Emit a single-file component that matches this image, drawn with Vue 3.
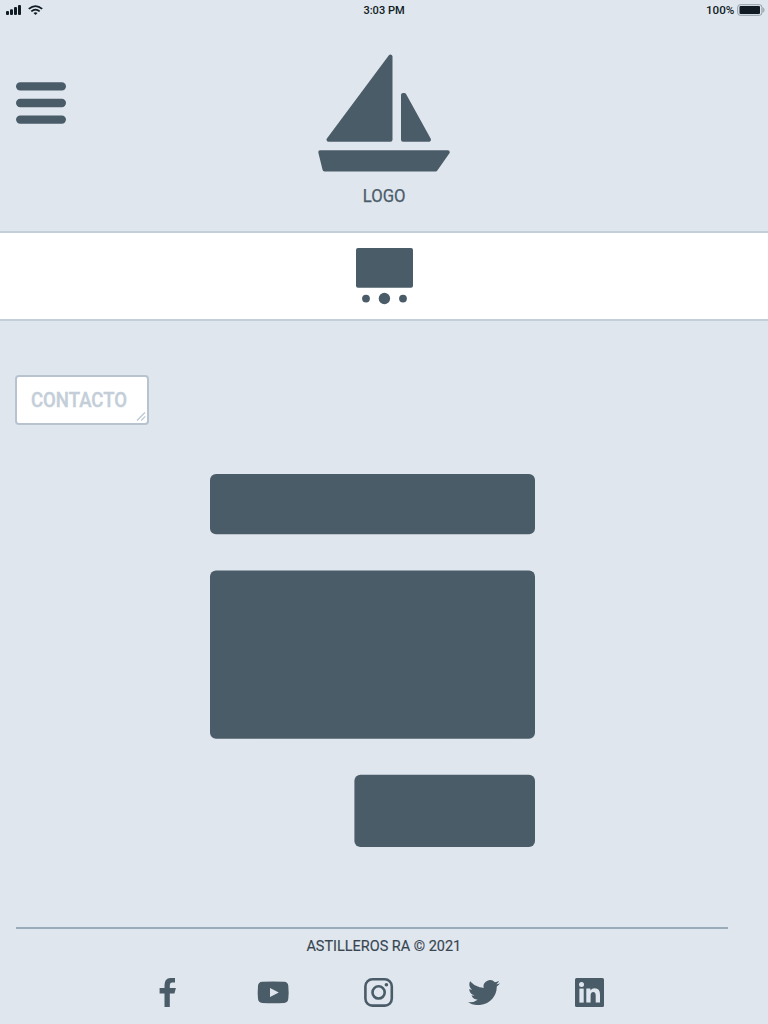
<script setup>
const bars = [0.2, 16.8, 33.4]
const blocks = [
  { name: 'name', x: 0, y: 0, width: 325, height: 60.2 },
  { name: 'message', x: 0, y: 96.4, width: 325, height: 168.3 },
  { name: 'submit', x: 144.4, y: 300.8, width: 180.6, height: 72.2 }
]
</script>

<template>
  <main class="screen">
    <div class="status">
      <svg class="signal" viewBox="0 0 46 20">
        <g fill="#101b24">
          <rect x="6" y="11" width="3" height="4" rx="1" />
          <rect x="10" y="9.3" width="3" height="5.7" rx="1" />
          <rect x="14" y="7" width="3" height="8" rx="1" />
          <rect x="18" y="5" width="3" height="10" rx="1" />
          <path d="M33.5 12.9q2-1.5 4 0l-2 2.1z" />
        </g>
        <g fill="none" stroke="#101b24" stroke-width="1.8">
          <path d="M28.8 8.9q6.7-5.6 13.4 0" />
          <path d="M31.3 11.4q4.2-3.5 8.4 0" />
        </g>
      </svg>
      <svg class="clock" viewBox="0 0 60 20">
        <text x="9.4" y="14" textLength="41.3" lengthAdjust="spacingAndGlyphs">3:03 PM</text>
      </svg>
      <svg class="battery" viewBox="0 0 68 20">
        <text x="6" y="14" textLength="28.4" lengthAdjust="spacingAndGlyphs">100%</text>
        <path d="M62.5 7q2.2 1 2.2 3t-2.2 3z" fill="#a5afb8" />
        <rect x="37.7" y="4.7" width="24.2" height="10.6" rx="2.5" fill="#dfe6ee" stroke="#929da7" stroke-width="1" />
        <rect x="39.5" y="6" width="20.5" height="8" rx="1" fill="#101b24" />
      </svg>
    </div>

    <header class="header">
      <svg class="menu" viewBox="0 0 50 42">
        <rect v-for="y in bars" :key="y" x="0" :y="y" width="50" height="8.4" rx="4.2" fill="#4b5c69" />
      </svg>
      <svg class="logo" viewBox="0 0 134 156">
        <g fill="#4b5c69" stroke="#4b5c69" stroke-width="4" stroke-linejoin="round">
          <path d="M73.5 6.5V89.7H11.5z" />
          <path d="M86 45L87.3 45L112 89.7H86z" />
          <path d="M3.3 102.2H130.8L118.7 119.4H7.5z" />
        </g>
        <text x="45.8" y="152" textLength="42.8" lengthAdjust="spacingAndGlyphs">LOGO</text>
      </svg>
    </header>

    <section class="carousel">
      <svg viewBox="0 0 58 58">
        <g fill="#4b5c69">
          <rect x="1" y="1" width="57" height="39.7" rx="2" />
          <circle cx="11" cy="51.6" r="3.9" />
          <circle cx="29.4" cy="51.5" r="5.7" />
          <circle cx="48" cy="51.6" r="3.9" />
        </g>
      </svg>
    </section>

    <div class="contact">
      <svg viewBox="0 0 130 46">
        <text x="14" y="30" textLength="96" lengthAdjust="spacingAndGlyphs">CONTACTO</text>
        <path d="M120 43.5L128 35.5M124.2 43.5L128.3 39.4" fill="none" stroke="#b9c7d3" stroke-width="1.2" />
      </svg>
    </div>

    <svg class="form" viewBox="0 0 325 373">
      <rect
        v-for="b in blocks"
        :key="b.name"
        :x="b.x"
        :y="b.y"
        :width="b.width"
        :height="b.height"
        rx="6"
        fill="#4b5c69"
      />
    </svg>

    <footer class="footer">
      <svg class="copy" viewBox="0 0 180 30">
        <text x="12.4" y="22" textLength="154.8" lengthAdjust="spacingAndGlyphs">ASTILLEROS RA © 2021</text>
      </svg>
      <nav class="social">
        <svg class="facebook" viewBox="0 0 18 30">
          <path d="M5.5 30V16.5H.6V11H5.5V8.3Q5.5 1.2 11.4 1H16V5.5H13Q10.8 5.5 10.8 8V11H16.9L15.4 16.5H10.8V30z" fill="#4b5c69" />
        </svg>
        <svg class="youtube" viewBox="0 0 32 24">
          <path transform="translate(.2 .8)" fill-rule="evenodd" d="M5 1Q16 .2 27 1Q30.7 1.3 31.1 5Q31.8 12 31.1 18Q30.7 21.8 27 22.1Q16 23 5 22.1Q1.2 21.8 .8 18Q.2 12 .8 5Q1.2 1.3 5 1zM12.8 7.1V16.2L21.6 11.6z" fill="#4b5c69" />
        </svg>
        <svg class="instagram" viewBox="0 0 30 30">
          <rect x="1.4" y="2.3" width="26.4" height="26.3" rx="7" fill="none" stroke="#4b5c69" stroke-width="2.6" />
          <circle cx="14.6" cy="15.4" r="6.1" fill="none" stroke="#4b5c69" stroke-width="2.6" />
          <circle cx="22.4" cy="7.7" r="1.8" fill="#4b5c69" />
        </svg>
        <svg class="twitter" viewBox="0 2.1 24 19.6" preserveAspectRatio="none">
          <path fill="#4b5c69" d="M23.953 4.57a10 10 0 01-2.825.775 4.958 4.958 0 002.163-2.723c-.951.555-2.005.959-3.127 1.184a4.92 4.92 0 00-8.384 4.482C7.69 8.095 4.067 6.13 1.64 3.162a4.822 4.822 0 00-.666 2.475c0 1.71.87 3.213 2.188 4.096a4.904 4.904 0 01-2.228-.616v.06a4.923 4.923 0 003.946 4.827 4.996 4.996 0 01-2.212.085 4.936 4.936 0 004.604 3.417 9.867 9.867 0 01-6.102 2.105c-.39 0-.779-.023-1.17-.067a13.995 13.995 0 007.557 2.209c9.053 0 13.998-7.496 13.998-13.985 0-.21 0-.42-.015-.63A9.935 9.935 0 0024 4.59z" />
        </svg>
        <svg class="linkedin" viewBox="0 0 30 30">
          <rect x="0" y="1" width="29" height="29" rx="1.5" fill="#4b5c69" />
          <g fill="#dfe6ee">
            <circle cx="6.5" cy="7.4" r="2.5" />
            <rect x="4.4" y="11.6" width="4.3" height="14" />
            <path d="M11.3 11.6H15.4V13.6Q16.8 11.3 19.7 11.3Q25 11.3 25 17.5V25.6H20.7V18.5Q20.7 15 18.3 15Q15.6 15 15.6 18.5V25.6H11.3z" />
          </g>
        </svg>
      </nav>
    </footer>
  </main>
</template>

<style>
body {
  margin: 0;
  background: #dfe6ee;
}
</style>

<style scoped>
.screen {
  box-sizing: border-box;
  width: 768px;
  height: 1024px;
  overflow: hidden;
  background: #dfe6ee;
  font-family: Roboto, "Liberation Sans", sans-serif;
}
svg {
  display: block;
  flex-shrink: 0;
}
.status {
  display: grid;
  grid-template-columns: 354px 346px 68px;
  height: 20px;
}
.signal { width: 46px; height: 20px; }
.clock { width: 60px; height: 20px; }
.battery { width: 68px; height: 20px; }
.status text {
  font-size: 11.3px;
  font-weight: 500;
  fill: #101b24;
}
.header {
  box-sizing: border-box;
  display: flex;
  height: 213px;
  padding: 30px 0 0 16px;
  border-bottom: 2px solid #c2ced9;
}
.menu {
  width: 50px;
  height: 42px;
  margin-top: 32px;
}
.logo {
  width: 134px;
  height: 156px;
  margin-left: 251px;
}
.logo text {
  font-size: 18px;
  fill: #4b5c69;
  stroke: #4b5c69;
  stroke-width: 0.25px;
}
.carousel {
  display: flex;
  height: 86px;
  border-bottom: 2px solid #c2ced9;
  background: #fff;
}
.carousel svg {
  width: 58px;
  height: 58px;
  margin: 14px 0 0 355px;
}
.contact {
  box-sizing: border-box;
  width: 134px;
  height: 50px;
  margin: 54px 0 0 15px;
  border: 2px solid #b7c4d0;
  border-radius: 4px;
  background: #fff;
}
.contact svg {
  width: 130px;
  height: 46px;
}
.contact text {
  font-size: 21px;
  font-weight: 500;
  fill: #c3ced9;
  stroke: #c3ced9;
  stroke-width: 0.4px;
}
.form {
  width: 325px;
  height: 373px;
  margin: 49px 0 0 210px;
}
.footer {
  width: 712px;
  margin: 80px 0 0 16px;
  border-top: 2px solid #9bacb9;
}
.copy {
  width: 180px;
  height: 30px;
  margin-left: 278px;
}
.copy text {
  font-size: 15.5px;
  fill: #374550;
  stroke: #374550;
  stroke-width: 0.15px;
}
.social {
  display: flex;
  align-items: center;
  height: 30px;
  margin: 18px 0 0 143px;
}
.facebook { width: 18px; height: 30px; }
.youtube { width: 32px; height: 24px; margin-left: 80px; }
.instagram { width: 30px; height: 30px; margin-left: 75px; }
.twitter { width: 32px; height: 25px; margin-left: 74px; }
.linkedin { width: 30px; height: 30px; margin-left: 75px; }
</style>
